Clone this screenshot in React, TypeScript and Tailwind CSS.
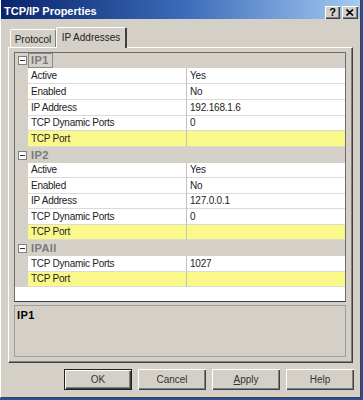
import React from "react";

type Row =
  | { kind: "cat"; label: string; h: string; focus?: boolean }
  | { kind: "prop"; name: string; value: string; h: string; yellow?: boolean };

const rows: Row[] = [
  { kind: "cat", label: "IP1", h: "h-[15px]", focus: true },
  { kind: "prop", name: "Active", value: "Yes", h: "h-[16px]" },
  { kind: "prop", name: "Enabled", value: "No", h: "h-[16px]" },
  { kind: "prop", name: "IP Address", value: "192.168.1.6", h: "h-[16px]" },
  { kind: "prop", name: "TCP Dynamic Ports", value: "0", h: "h-[15px]" },
  { kind: "prop", name: "TCP Port", value: "", h: "h-[16px]", yellow: true },
  { kind: "cat", label: "IP2", h: "h-[16px]" },
  { kind: "prop", name: "Active", value: "Yes", h: "h-[15px]" },
  { kind: "prop", name: "Enabled", value: "No", h: "h-[16px]" },
  { kind: "prop", name: "IP Address", value: "127.0.0.1", h: "h-[15px]" },
  { kind: "prop", name: "TCP Dynamic Ports", value: "0", h: "h-[16px]" },
  { kind: "prop", name: "TCP Port", value: "", h: "h-[15px]", yellow: true },
  { kind: "cat", label: "IPAll", h: "h-[16px]" },
  { kind: "prop", name: "TCP Dynamic Ports", value: "1027", h: "h-[16px]" },
  { kind: "prop", name: "TCP Port", value: "", h: "h-[15px]", yellow: true },
];

function MinusBox() {
  return (
    <div className="w-[9px] h-[9px] border border-[#808080] bg-white flex items-center justify-center">
      <div className="w-[5px] h-[1px] bg-[#333]" />
    </div>
  );
}

function GridRow({ row }: { row: Row }) {
  if (row.kind === "cat") {
    return (
      <div className={`${row.h} flex items-stretch bg-[#d4d0c8]`}>
        <div className="w-[13px] flex items-center justify-center pl-[1px]">
          <MinusBox />
        </div>
        <div className="flex items-center">
          <span
            className={`${
              row.focus ? "border border-[#8a8a8a]" : "border border-transparent"
            } h-[15px] pl-[2px] pr-[3px] flex items-center text-[11px] font-bold text-[#7a7a7a] tracking-[0.4px] leading-none`}
          >
            {row.label}
          </span>
        </div>
      </div>
    );
  }
  const bg = row.yellow ? "bg-[#fbf88a]" : "bg-white";
  return (
    <div className={`${row.h} flex items-stretch`}>
      <div className="w-[13px] bg-[#d4d0c8]" />
      <div
        className={`w-[158px] ${bg} border-b border-[#dcdad4] pl-[3px] flex items-center text-[10px] text-[#222] tracking-[-0.25px] leading-none whitespace-nowrap`}
      >
        {row.name}
      </div>
      <div className="w-[1px] bg-[#c4c2bc]" />
      <div
        className={`flex-1 ${bg} border-b border-[#dcdad4] pl-[3px] flex items-center text-[10px] text-[#222] tracking-[-0.2px] leading-none`}
      >
        {row.value}
      </div>
    </div>
  );
}

function Btn({ label, def, u }: { label: string; def?: boolean; u?: boolean }) {
  return (
    <div
      className={`w-[68px] h-[21px] bg-[#d4d0c8] flex items-center justify-center text-[10px] text-[#333] ${
        def
          ? "border border-[#222] shadow-[inset_1px_1px_0_#fff,inset_-1px_-1px_0_#404040,inset_-2px_-2px_0_#808080]"
          : "shadow-[inset_1px_1px_0_#fff,inset_-1px_-1px_0_#404040,inset_-2px_-2px_0_#808080]"
      }`}
    >
      {u ? (
        <span>
          <span className="underline">A</span>pply
        </span>
      ) : (
        label
      )}
    </div>
  );
}

export default function App() {
  return (
    <div className="w-[363px] h-[400px] bg-[#2c4f9c] overflow-hidden font-['Liberation_Sans',Arial,sans-serif]">
      <div className="w-[361px] h-[398px] bg-[#d4d0c8] border-l border-white border-r border-r-[#404040] border-b border-b-[#404040] flex flex-col">
        {/* Title bar */}
        <div className="h-[19px] shrink-0 bg-gradient-to-r from-[#0a246a] via-[#3a6ab8] to-[#a6caf0] flex items-start justify-between pl-[3px] pr-[2px]">
          <div className="mt-[5px] text-[11px] leading-[13px] font-bold text-white">
            TCP/IP Properties
          </div>
          <div className="flex gap-[2px] mt-[6px]">
            <div className="w-[15px] h-[13px] bg-[#d4d0c8] shadow-[inset_1px_1px_0_#fff,inset_-1px_-1px_0_#404040,inset_-2px_-2px_0_#808080] flex items-center justify-center text-[11px] font-bold leading-none text-black pb-[1px]">
              ?
            </div>
            <div className="w-[16px] h-[13px] bg-[#d4d0c8] shadow-[inset_1px_1px_0_#fff,inset_-1px_-1px_0_#404040,inset_-2px_-2px_0_#808080] flex items-center justify-center">
              <svg width="8" height="7" viewBox="0 0 8 7">
                <path d="M0.5 0.5 L7 6.5 M7 0.5 L0.5 6.5" stroke="#000" strokeWidth="1.6" />
              </svg>
            </div>
          </div>
        </div>

        {/* Tabs */}
        <div className="mt-[8px] h-[20px] flex items-end pl-[9px] relative z-10">
          <div className="w-[46px] h-[18px] border-t border-l border-white border-r border-r-[#808080] rounded-t-[2px] flex items-center justify-center text-[10px] text-[#222] pt-[2px]">
            Protocol
          </div>
          <div className="w-[71px] h-[21px] -mb-px bg-[#d4d0c8] border-t border-l border-white border-r-2 border-r-[#404040] rounded-t-[2px] flex items-center justify-center text-[10px] text-[#222] pb-[2px]">
            IP Addresses
          </div>
        </div>

        {/* Panel */}
        <div className="ml-[7px] w-[345px] h-[316px] border-t border-l border-white border-r border-r-[#404040] border-b border-b-[#404040] shadow-[inset_-1px_-1px_0_#808080] pl-[5px] pt-[4px] flex flex-col">
          {/* Property grid */}
          <div className="w-[332px] h-[250px] border border-[#6c6c6c] border-b-[#404040] flex flex-col bg-white">
            {rows.map((r, i) => (
              <GridRow key={i} row={r} />
            ))}
            <div className="flex-1 bg-white" />
          </div>
          {/* Description */}
          <div className="mt-[3px] w-[332px] h-[52px] border border-[#a09e98] pl-[2px] pt-[4px]">
            <div className="text-[11px] font-bold text-black leading-none tracking-[0.4px]">IP1</div>
          </div>
        </div>

        {/* Buttons */}
        <div className="mt-[6px] flex justify-end gap-[6px] pr-[6px]">
          <Btn label="OK" def />
          <Btn label="Cancel" />
          <Btn label="Apply" u />
          <Btn label="Help" />
        </div>
      </div>
    </div>
  );
}
